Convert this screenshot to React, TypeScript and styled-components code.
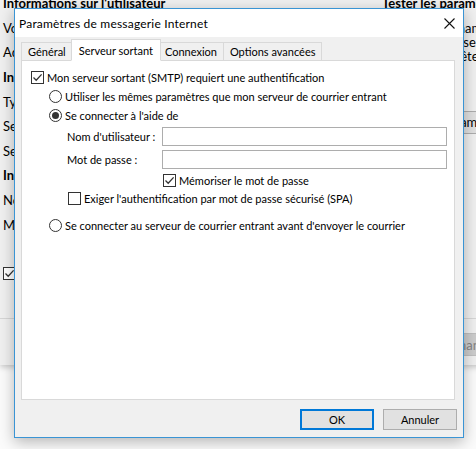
import React from 'react';
import styled, { createGlobalStyle } from 'styled-components';

const GlobalStyle = createGlobalStyle`
  html, body {
    margin: 0;
    padding: 0;
    background: #fbfbfb;
    overflow: hidden;
  }
  body {
    font-family: Lato, "Noto Sans", sans-serif;
    font-size: 11px;
    color: #000;
  }
`;

const Desktop = styled.div`
  position: relative;
  width: 476px;
  height: 449px;
  overflow: hidden;
`;

/* window behind the dialog */
const ParentWindow = styled.div`
  position: absolute;
  left: 0;
  top: -9px;
  width: 520px;
  height: 374px;
  background: #f0f0f0;
  box-shadow: 0 2px 6px rgba(0, 0, 0, 0.22);
  display: flex;
  flex-direction: column;
  font-size: 13px;
`;

const ParentMain = styled.div`
  height: 327px;
  display: flex;
  border-bottom: 1px solid #d6d6d6;
`;

const LeftCol = styled.div`
  flex: none;
  width: 379px;
  padding-left: 3px;
  display: flex;
  flex-direction: column;
`;

const Line = styled.div<{ $bold?: boolean }>`
  height: 24.6px;
  display: flex;
  align-items: center;
  white-space: nowrap;
  font-weight: ${(p) => (p.$bold ? 700 : 400)};
`;

const ParentCheckRow = styled.div`
  margin-top: 29px;
  display: flex;
  align-items: center;
  gap: 3px;
  white-space: nowrap;
`;

const RightCol = styled.div`
  flex: 1;
  min-width: 0;
  display: flex;
  flex-direction: column;
  white-space: nowrap;
`;

const Para = styled.div`
  margin-top: 5px;
  line-height: 14px;
`;

const ParentButton = styled.div<{ $disabled?: boolean }>`
  height: 21px;
  display: flex;
  align-items: center;
  padding: 0 8px;
  background: ${(p) => (p.$disabled ? '#cccccc' : '#e1e1e1')};
  border: 1px solid ${(p) => (p.$disabled ? '#bfbfbf' : '#adadad')};
  color: ${(p) => (p.$disabled ? '#838383' : '#000')};
  white-space: nowrap;
`;

const TestButton = styled(ParentButton)`
  margin-top: 48px;
  width: fit-content;
  padding-left: 2px;
`;

const ParentFooter = styled.div`
  flex: 1;
  display: flex;
  align-items: flex-start;
  padding: 14px 0 0 420px;
`;

/* the dialog */
const Dialog = styled.div`
  position: absolute;
  left: 14px;
  top: 8px;
  width: 450px;
  height: 430px;
  box-sizing: border-box;
  border: 1px solid #3a94d4;
  background: #f0f0f0;
  box-shadow: 0 4px 14px rgba(0, 0, 0, 0.28);
  display: flex;
  flex-direction: column;
`;

const TitleBar = styled.div`
  height: 28px;
  background: #fff;
  display: flex;
  align-items: center;
  justify-content: space-between;
  padding: 0 8px 0 4px;
  font-size: 12px;
  letter-spacing: 0.2px;
`;

const CloseButton = styled.div`
  width: 11px;
  height: 11px;
  display: flex;
`;

const Body = styled.div`
  flex: 1;
  display: flex;
  flex-direction: column;
  padding: 2px 8px 0 6px;
`;

const TabRow = styled.div`
  height: 22px;
  display: flex;
  align-items: flex-end;
  margin-bottom: -1px;
  position: relative;
  z-index: 1;
`;

const Tab = styled.div<{ $active?: boolean }>`
  box-sizing: border-box;
  height: ${(p) => (p.$active ? '22px' : '19px')};
  padding: ${(p) => (p.$active ? '0 7px' : '0 6px')};
  margin: ${(p) => (p.$active ? '0 -2px' : '0 0 0 -1px')};
  display: flex;
  align-items: center;
  background: ${(p) => (p.$active ? '#fff' : '#f0f0f0')};
  border: 1px solid #d9d9d9;
  border-bottom-color: ${(p) => (p.$active ? '#fff' : '#d9d9d9')};
  position: relative;
  z-index: ${(p) => (p.$active ? 2 : 1)};
  white-space: nowrap;
  &:first-child {
    margin-left: 0;
  }
`;

const Panel = styled.div`
  height: 340px;
  box-sizing: border-box;
  background: #fff;
  border: 1px solid #d9d9d9;
  padding: 7px 8px 0 9px;
  display: flex;
  flex-direction: column;
`;

const OptionRow = styled.div<{ $indent?: number; $top?: number }>`
  height: 19px;
  display: flex;
  align-items: center;
  gap: 3px;
  margin-left: ${(p) => p.$indent ?? 0}px;
  margin-top: ${(p) => p.$top ?? 0}px;
  white-space: nowrap;
`;

const Box = styled.span`
  width: 13px;
  height: 13px;
  box-sizing: border-box;
  border: 1px solid #333;
  background: #fff;
  display: inline-flex;
  align-items: center;
  justify-content: center;
  flex: none;
`;

const Radio = styled(Box)<{ $on?: boolean }>`
  border-radius: 50%;
  &::after {
    content: '';
    width: 7px;
    height: 7px;
    border-radius: 50%;
    background: ${(p) => (p.$on ? '#333' : 'transparent')};
  }
`;

const Credentials = styled.div`
  margin: 2px 0 0 36px;
  display: grid;
  grid-template-columns: 95px 285px;
  row-gap: 4px;
  align-items: center;
`;

const FieldLabel = styled.div`
  white-space: nowrap;
`;

const Input = styled.div`
  height: 19px;
  box-sizing: border-box;
  border: 1px solid #adadad;
  background: #fff;
`;

const Remember = styled(OptionRow)`
  grid-column: 2;
  margin-left: 1px;
  margin-top: -2px;
`;

const Footer = styled.div`
  flex: 1;
  display: flex;
  justify-content: flex-end;
  align-items: flex-start;
  gap: 9px;
  padding: 9px 0 0 0;
  margin-right: -2px;
`;

const DialogButton = styled.div<{ $default?: boolean }>`
  width: 74px;
  height: 21px;
  box-sizing: border-box;
  display: flex;
  align-items: center;
  justify-content: center;
  background: #e1e1e1;
  border: ${(p) => (p.$default ? '2px solid #0078d7' : '1px solid #adadad')};
`;

const Check = () => (
  <svg width="11" height="11" viewBox="0 0 11 11">
    <path d="M1.5 5.5 L4.2 8.2 L9.6 2.4" fill="none" stroke="#333" strokeWidth="1.3" />
  </svg>
);

const App = () => {
  return (
    <Desktop>
      <GlobalStyle />
      <ParentWindow>
        <ParentMain>
          <LeftCol>
            <Line $bold>Informations sur l'utilisateur</Line>
            <Line>Votre nom :</Line>
            <Line>Adresse de messagerie :</Line>
            <Line $bold>Informations sur le serveur</Line>
            <Line>Type de compte :</Line>
            <Line>Serveur de courrier entrant :</Line>
            <Line>Serveur de courrier sortant (SMTP) :</Line>
            <Line $bold>Informations de connexion</Line>
            <Line>Nom d'utilisateur :</Line>
            <Line>Mot de passe :</Line>
            <ParentCheckRow>
              <Box>
                <Check />
              </Box>
              Mémoriser le mot de passe
            </ParentCheckRow>
          </LeftCol>
          <RightCol>
            <Line $bold>Tester les paramètres du compte</Line>
            <Para>
              <div>Une fois les champs complétés,</div>
              <div>nous vous conseillons de</div>
              <div>tester si vous êtes connecté.</div>
            </Para>
            <TestButton>Tester les paramètres du compte...</TestButton>
          </RightCol>
        </ParentMain>
        <ParentFooter>
          <ParentButton $disabled>Commander</ParentButton>
        </ParentFooter>
      </ParentWindow>

      <Dialog>
        <TitleBar>
          <span>Paramètres de messagerie Internet</span>
          <CloseButton>
            <svg width="11" height="11" viewBox="0 0 11 11">
              <path d="M0.5 0.5 L10.5 10.5 M10.5 0.5 L0.5 10.5" stroke="#111" strokeWidth="1.1" />
            </svg>
          </CloseButton>
        </TitleBar>
        <Body>
          <TabRow>
            <Tab>Général</Tab>
            <Tab $active>Serveur sortant</Tab>
            <Tab>Connexion</Tab>
            <Tab>Options avancées</Tab>
          </TabRow>
          <Panel>
            <OptionRow>
              <Box>
                <Check />
              </Box>
              Mon serveur sortant (SMTP) requiert une authentification
            </OptionRow>
            <OptionRow $indent={18}>
              <Radio />
              Utiliser les mêmes paramètres que mon serveur de courrier entrant
            </OptionRow>
            <OptionRow $indent={18}>
              <Radio $on />
              Se connecter à l'aide de
            </OptionRow>
            <Credentials>
              <FieldLabel>Nom d'utilisateur :</FieldLabel>
              <Input />
              <FieldLabel>Mot de passe :</FieldLabel>
              <Input />
              <Remember>
                <Box>
                  <Check />
                </Box>
                Mémoriser le mot de passe
              </Remember>
            </Credentials>
            <OptionRow $indent={37} $top={-1}>
              <Box />
              Exiger l'authentification par mot de passe sécurisé (SPA)
            </OptionRow>
            <OptionRow $indent={18} $top={8}>
              <Radio />
              Se connecter au serveur de courrier entrant avant d'envoyer le courrier
            </OptionRow>
          </Panel>
          <Footer>
            <DialogButton $default>OK</DialogButton>
            <DialogButton>Annuler</DialogButton>
          </Footer>
        </Body>
      </Dialog>
    </Desktop>
  );
};

export default App;
